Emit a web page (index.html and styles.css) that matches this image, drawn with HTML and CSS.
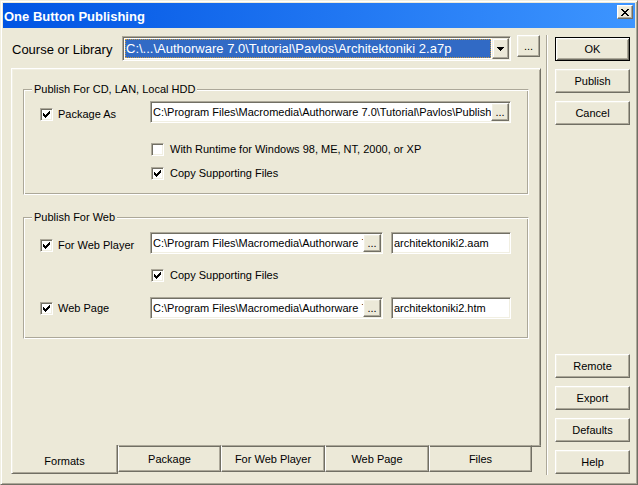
FILE: index.html
```html
<!DOCTYPE html>
<html>
<head>
<meta charset="utf-8">
<title>One Button Publishing</title>
<link rel="stylesheet" href="styles.css">
</head>
<body>
<div class="window">
  <div class="titlebar">
    <span class="title">One Button Publishing</span>
    <div class="close">
      <svg width="8" height="7" viewBox="0 0 8 7" shape-rendering="crispEdges"><path fill="#000" d="M0 0h2v1h-2z M6 0h2v1h-2z M1 1h2v1h-2z M5 1h2v1h-2z M2 2h4v1h-4z M3 3h2v1h-2z M2 4h4v1h-4z M1 5h2v1h-2z M5 5h2v1h-2z M0 6h2v1h-2z M6 6h2v1h-2z"/></svg>
    </div>
  </div>
  <div class="content">
    <div class="main">
      <div class="top-row">
        <span class="top-label">Course or Library</span>
        <div class="combo">
          <div class="combo-value"><span class="combo-sel">C:\...\Authorware 7.0\Tutorial\Pavlos\Architektoniki 2.a7p</span></div>
          <div class="combo-btn">
            <svg width="7" height="4" viewBox="0 0 7 4" shape-rendering="crispEdges"><path fill="#000" d="M0 0h7v1h-7z M1 1h5v1h-5z M2 2h3v1h-3z M3 3h1v1h-1z"/></svg>
          </div>
        </div>
        <div class="btn btn-browse">...</div>
      </div>

      <div class="tabctl">
        <div class="tab-page">
          <div class="group group-cd">
            <div class="group-title">Publish For CD, LAN, Local HDD</div>
            <div class="row row-pkg">
              <div class="chk-label">
                <span class="chk"><svg width="7" height="7" viewBox="0 0 7 7" shape-rendering="crispEdges"><path fill="#000" d="M6 0h1v1h-1z M5 1h2v1h-2z M0 2h1v1h-1z M4 2h3v1h-3z M0 3h2v1h-2z M3 3h3v1h-3z M0 4h5v1h-5z M1 5h3v1h-3z M2 6h1v1h-1z"/></svg></span>
                <span>Package As</span>
              </div>
              <div class="field field-pkg">
                <span class="field-text">C:\Program Files\Macromedia\Authorware 7.0\Tutorial\Pavlos\Published</span>
                <div class="btn field-btn">...</div>
              </div>
            </div>
            <div class="row row-sub row-runtime">
              <div class="chk-label">
                <span class="chk"></span>
                <span>With Runtime for Windows 98, ME, NT, 2000, or XP</span>
              </div>
            </div>
            <div class="row row-sub row-copy1">
              <div class="chk-label">
                <span class="chk"><svg width="7" height="7" viewBox="0 0 7 7" shape-rendering="crispEdges"><path fill="#000" d="M6 0h1v1h-1z M5 1h2v1h-2z M0 2h1v1h-1z M4 2h3v1h-3z M0 3h2v1h-2z M3 3h3v1h-3z M0 4h5v1h-5z M1 5h3v1h-3z M2 6h1v1h-1z"/></svg></span>
                <span>Copy Supporting Files</span>
              </div>
            </div>
          </div>

          <div class="group group-web">
            <div class="group-title">Publish For Web</div>
            <div class="row row-player">
              <div class="chk-label">
                <span class="chk"><svg width="7" height="7" viewBox="0 0 7 7" shape-rendering="crispEdges"><path fill="#000" d="M6 0h1v1h-1z M5 1h2v1h-2z M0 2h1v1h-1z M4 2h3v1h-3z M0 3h2v1h-2z M3 3h3v1h-3z M0 4h5v1h-5z M1 5h3v1h-3z M2 6h1v1h-1z"/></svg></span>
                <span>For Web Player</span>
              </div>
              <div class="field field-web">
                <span class="field-text">C:\Program Files\Macromedia\Authorware 7.0\</span>
                <div class="btn field-btn">...</div>
              </div>
              <div class="field field-name"><span class="field-text">architektoniki2.aam</span></div>
            </div>
            <div class="row row-sub row-copy2">
              <div class="chk-label">
                <span class="chk"><svg width="7" height="7" viewBox="0 0 7 7" shape-rendering="crispEdges"><path fill="#000" d="M6 0h1v1h-1z M5 1h2v1h-2z M0 2h1v1h-1z M4 2h3v1h-3z M0 3h2v1h-2z M3 3h3v1h-3z M0 4h5v1h-5z M1 5h3v1h-3z M2 6h1v1h-1z"/></svg></span>
                <span>Copy Supporting Files</span>
              </div>
            </div>
            <div class="row row-page">
              <div class="chk-label">
                <span class="chk"><svg width="7" height="7" viewBox="0 0 7 7" shape-rendering="crispEdges"><path fill="#000" d="M6 0h1v1h-1z M5 1h2v1h-2z M0 2h1v1h-1z M4 2h3v1h-3z M0 3h2v1h-2z M3 3h3v1h-3z M0 4h5v1h-5z M1 5h3v1h-3z M2 6h1v1h-1z"/></svg></span>
                <span>Web Page</span>
              </div>
              <div class="field field-web">
                <span class="field-text">C:\Program Files\Macromedia\Authorware 7.0\</span>
                <div class="btn field-btn">...</div>
              </div>
              <div class="field field-name"><span class="field-text">architektoniki2.htm</span></div>
            </div>
          </div>
        </div>

        <div class="tabs">
          <div class="tab tab-sel">Formats</div>
          <div class="tab tab-a">Package</div>
          <div class="tab tab-b">For Web Player</div>
          <div class="tab tab-b">Web Page</div>
          <div class="tab tab-a">Files</div>
          <div class="tab-fill"></div>
        </div>
      </div>
    </div>

    <div class="sep"></div>

    <div class="side">
      <div class="btn-group">
        <div class="btn side-btn btn-default">OK</div>
        <div class="btn side-btn">Publish</div>
        <div class="btn side-btn">Cancel</div>
      </div>
      <div class="btn-group">
        <div class="btn side-btn">Remote</div>
        <div class="btn side-btn">Export</div>
        <div class="btn side-btn">Defaults</div>
        <div class="btn side-btn">Help</div>
      </div>
    </div>
  </div>
</div>
</body>
</html>
```

FILE: styles.css
```css
* { box-sizing: border-box; }

html, body {
  margin: 0;
  padding: 0;
}

body {
  width: 638px;
  height: 485px;
  overflow: hidden;
  background: #ECE9D8;
  font-family: "Liberation Sans", Arial, sans-serif;
  font-size: 11px;
  line-height: 13px;
  color: #000;
}

.window {
  width: 638px;
  height: 485px;
  display: flex;
  flex-direction: column;
  background: #ECE9D8;
  border: 1px solid;
  border-color: #F1EFE2 #716F64 #716F64 #F1EFE2;
  box-shadow: inset 1px 1px #fff, inset -1px -1px #ACA899;
  padding: 2px;
}

/* ---------- title bar ---------- */
.titlebar {
  flex: none;
  height: 25px;
  display: flex;
  align-items: flex-start;
  justify-content: space-between;
  padding: 2px 2px 0 1px;
  background: linear-gradient(to right, #0054E3, #3D95FF);
}

.title {
  color: #fff;
  font-weight: bold;
  font-size: 13px;
  line-height: 15px;
  margin-top: 4px;
}

.close {
  width: 16px;
  height: 14px;
  display: flex;
  align-items: center;
  justify-content: center;
  background: #ECE9D8;
  border: 1px solid;
  border-color: #fff #716F64 #716F64 #fff;
  box-shadow: inset -1px -1px #ACA899, inset 1px 1px #F1EFE2;
}

/* ---------- generic button ---------- */
.btn {
  display: flex;
  align-items: center;
  justify-content: center;
  background: #ECE9D8;
  border: 1px solid;
  border-color: #fff #716F64 #716F64 #fff;
  box-shadow: inset -1px -1px #ACA899, inset 1px 1px #F1EFE2;
  font-size: 11px;
  line-height: 13px;
  color: #000;
}

/* ---------- layout ---------- */
.content {
  flex: 1;
  display: flex;
  min-height: 0;
}

.main {
  width: 538px;
  flex: none;
  display: flex;
  flex-direction: column;
}

.top-row {
  display: flex;
  align-items: flex-start;
  height: 26px;
  margin-top: 7px;
  padding-left: 9px;
}

.top-label {
  width: 110px;
  flex: none;
  font-size: 13px;
  line-height: 15px;
  margin-top: 7px;
}

.combo {
  width: 389px;
  height: 25px;
  flex: none;
  margin-top: 1px;
  display: flex;
  background: #fff;
  border: 1px solid;
  border-color: #ACA899 #fff #fff #ACA899;
  box-shadow: inset 1px 1px #716F64, inset -1px -1px #F1EFE2;
  padding: 1px;
}

.combo-value {
  flex: 1;
  min-width: 0;
  padding: 1px;
  display: flex;
}

.combo-sel {
  flex: 1;
  background: #316AC5;
  color: #fff;
  border: 1px dotted #C99A3E;
  font-size: 13px;
  line-height: 17px;
  padding-left: 0;
  white-space: nowrap;
  overflow: hidden;
}

.combo-btn {
  width: 17px;
  flex: none;
  display: flex;
  align-items: center;
  justify-content: center;
  background: #ECE9D8;
  border: 1px solid;
  border-color: #F1EFE2 #716F64 #716F64 #F1EFE2;
  box-shadow: inset -1px -1px #ACA899, inset 1px 1px #fff;
}

.btn-browse {
  width: 23px;
  height: 22px;
  flex: none;
  margin-left: 6px;
}

/* ---------- tab control ---------- */
.tabctl {
  width: 530px;
  margin: 7px 0 0 8px;
  display: flex;
  flex-direction: column;
}

.tab-page {
  height: 377px;
  border: 1px solid;
  border-bottom: none;
  border-color: #fff #716F64 transparent #fff;
  box-shadow: inset 1px 1px #F1EFE2, inset -1px 0 #ACA899;
  padding: 0 11px;
  display: flex;
  flex-direction: column;
}

.tabs {
  display: flex;
  align-items: flex-start;
  height: 29px;
}

.tab {
  flex: none;
  height: 27px;
  text-align: center;
  padding-top: 7px;
  border: 1px solid;
  border-color: #ACA899 #716F64 #716F64 #fff;
  box-shadow: inset 0 1px #716F64, inset -1px -1px #ACA899;
}

.tab-sel {
  width: 107px;
  height: 29px;
  padding-top: 10px;
  border-top: none;
  border-color: transparent #716F64 #716F64 #fff;
  box-shadow: inset 1px 0 #F1EFE2, inset -1px -1px #ACA899;
}

.tab-a { width: 103px; }
.tab-b { width: 104px; }

.tab-fill {
  flex: 1;
  height: 2px;
  border-top: 1px solid #ACA899;
  border-right: 1px solid #716F64;
  box-shadow: inset 0 1px #716F64;
}

/* ---------- group boxes ---------- */
.group {
  border: 1px solid;
  border-color: #ACA899 #fff #fff #ACA899;
  box-shadow: inset 1px 1px #fff, inset -1px -1px #ACA899;
}

.group-cd {
  margin-top: 20px;
  padding-bottom: 14px;
}

.group-web {
  margin-top: 22px;
  padding-bottom: 19px;
}

.group-title {
  display: table;
  margin: -7px 0 0 8px;
  padding: 0 2px;
  background: #ECE9D8;
  line-height: 13px;
}

.row {
  display: flex;
  align-items: flex-start;
  padding-left: 16px;
}

.row-sub { padding-left: 127px; }

.chk-label {
  width: 110px;
  flex: none;
  display: flex;
  align-items: center;
  gap: 5px;
  white-space: nowrap;
}

.row-sub .chk-label {
  width: auto;
  gap: 6px;
}

.chk {
  width: 13px;
  height: 13px;
  flex: none;
  display: flex;
  align-items: center;
  justify-content: center;
  background: #fff;
  border: 1px solid;
  border-color: #ACA899 #fff #fff #ACA899;
  box-shadow: inset 1px 1px #716F64, inset -1px -1px #F1EFE2;
}

.row-pkg { margin-top: 5px; }
.row-pkg .chk-label { margin-top: 7px; }
.row-runtime { margin-top: 20px; }
.row-copy1 { margin-top: 11px; }

.row-player { margin-top: 8px; }
.row-player .chk-label { margin-top: 7px; }
.row-copy2 { margin-top: 15px; }
.row-page { margin-top: 15px; }
.row-page .chk-label { margin-top: 5px; }

.field {
  height: 22px;
  flex: none;
  display: flex;
  align-items: center;
  background: #fff;
  border: 1px solid;
  border-color: #ACA899 #fff #fff #ACA899;
  box-shadow: inset 1px 1px #716F64, inset -1px -1px #F1EFE2;
  padding: 0 1px 0 2px;
  overflow: hidden;
}

.field-text {
  flex: 1;
  min-width: 0;
  white-space: nowrap;
  overflow: hidden;
}

.field-pkg { width: 361px; }
.field-web { width: 233px; }
.field-name { width: 120px; margin-left: 8px; }

.field-btn {
  width: 18px;
  height: 18px;
  flex: none;
  line-height: 12px;
  align-items: flex-end;
  padding-bottom: 2px;
}

/* ---------- separator & side buttons ---------- */
.sep {
  width: 2px;
  flex: none;
  margin: 7px 0 7px 5px;
  border-left: 1px solid #ACA899;
  border-right: 1px solid #fff;
}

.side {
  width: 75px;
  flex: none;
  margin-left: 7px;
  padding: 9px 0 8px;
  display: flex;
  flex-direction: column;
  justify-content: space-between;
}

.btn-group {
  display: flex;
  flex-direction: column;
  gap: 8px;
}

.side-btn {
  width: 75px;
  height: 24px;
}

.btn-default {
  border: 1px solid #000;
  box-shadow: inset 1px 1px #fff, inset -1px -1px #716F64, inset 2px 2px #F1EFE2, inset -2px -2px #ACA899;
}
```
